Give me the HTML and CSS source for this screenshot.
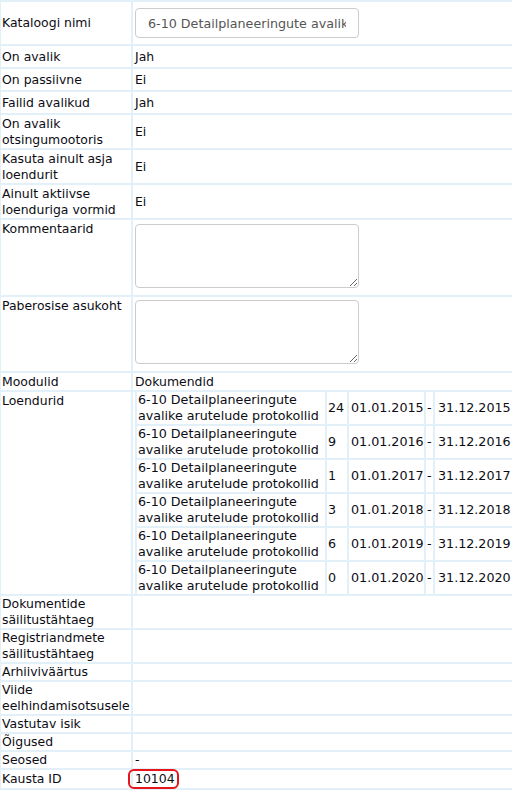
FILE: index.html
```html
<!DOCTYPE html>
<html lang="et">
<head>
<meta charset="utf-8">
<title>Kataloog</title>
<link rel="stylesheet" href="styles.css">
</head>
<body>
<table class="form">
  <tr class="r-first">
    <td class="lbl">Kataloogi nimi</td>
    <td class="val"><input class="field" type="text" value="6-10 Detailplaneeringute avalike arutelude protokollid"></td>
  </tr>
  <tr class="r-one"><td class="lbl">On avalik</td><td class="val">Jah</td></tr>
  <tr class="r-one"><td class="lbl">On passiivne</td><td class="val">Ei</td></tr>
  <tr class="r-one"><td class="lbl">Failid avalikud</td><td class="val">Jah</td></tr>
  <tr class="r-two"><td class="lbl">On avalik otsingumootoris</td><td class="val">Ei</td></tr>
  <tr class="r-two"><td class="lbl">Kasuta ainult asja loendurit</td><td class="val">Ei</td></tr>
  <tr class="r-two"><td class="lbl">Ainult aktiivse loenduriga vormid</td><td class="val">Ei</td></tr>
  <tr><td class="lbl top">Kommentaarid</td><td class="val"><textarea class="area"></textarea></td></tr>
  <tr><td class="lbl top">Paberosise asukoht</td><td class="val"><textarea class="area area2"></textarea></td></tr>
  <tr class="r-mod"><td class="lbl">Moodulid</td><td class="val">Dokumendid</td></tr>
  <tr>
    <td class="lbl top">Loendurid</td>
    <td class="val nest-cell">
      <table class="counters">
        <tr><td class="c-name">6-10 Detailplaneeringute avalike arutelude protokollid</td><td class="c-num">24</td><td class="c-date">01.01.2015</td><td class="c-dash">-</td><td class="c-end">31.12.2015</td></tr>
        <tr><td class="c-name">6-10 Detailplaneeringute avalike arutelude protokollid</td><td class="c-num">9</td><td class="c-date">01.01.2016</td><td class="c-dash">-</td><td class="c-end">31.12.2016</td></tr>
        <tr><td class="c-name">6-10 Detailplaneeringute avalike arutelude protokollid</td><td class="c-num">1</td><td class="c-date">01.01.2017</td><td class="c-dash">-</td><td class="c-end">31.12.2017</td></tr>
        <tr><td class="c-name">6-10 Detailplaneeringute avalike arutelude protokollid</td><td class="c-num">3</td><td class="c-date">01.01.2018</td><td class="c-dash">-</td><td class="c-end">31.12.2018</td></tr>
        <tr><td class="c-name">6-10 Detailplaneeringute avalike arutelude protokollid</td><td class="c-num">6</td><td class="c-date">01.01.2019</td><td class="c-dash">-</td><td class="c-end">31.12.2019</td></tr>
        <tr><td class="c-name">6-10 Detailplaneeringute avalike arutelude protokollid</td><td class="c-num">0</td><td class="c-date">01.01.2020</td><td class="c-dash">-</td><td class="c-end">31.12.2020</td></tr>
      </table>
    </td>
  </tr>
  <tr><td class="lbl">Dokumentide säilitustähtaeg</td><td class="val"></td></tr>
  <tr><td class="lbl">Registriandmete säilitustähtaeg</td><td class="val"></td></tr>
  <tr><td class="lbl">Arhiiviväärtus</td><td class="val"></td></tr>
  <tr><td class="lbl">Viide eelhindamisotsusele</td><td class="val"></td></tr>
  <tr><td class="lbl">Vastutav isik</td><td class="val"></td></tr>
  <tr><td class="lbl">Õigused</td><td class="val"></td></tr>
  <tr><td class="lbl">Seosed</td><td class="val">-</td></tr>
  <tr class="r-id"><td class="lbl">Kausta ID</td><td class="val"><span class="mark">10104</span></td></tr>
</table>
</body>
</html>
```
FILE: styles.css
```css
html, body {
  margin: 0;
  padding: 0;
  background: #ffffff;
  overflow: hidden;
}

body {
  font-family: "DejaVu Sans", Verdana, sans-serif;
  font-size: 12.45px;
  line-height: 16px;
  color: #0c0c14;
}

.form {
  border-collapse: separate;
  border-spacing: 2px;
  background: #e1f0f9;
  width: 524px;
  margin: 0 0 0 -1px;
}

.form td {
  background: #ffffff;
  padding: 0 2px 0 2px;
  vertical-align: middle;
}

.form td.lbl {
  width: 129px;
  padding: 0 0 0 1px;
}

.form td.top {
  vertical-align: top;
  padding-top: 1px;
}

.r-first td { height: 42px; }
.r-one td { height: 21px; }
.r-two td { height: 33px; }
.r-mod td { height: 17px; }
.r-id td { height: 18px; }

.field {
  display: block;
  box-sizing: border-box;
  width: 224px;
  height: 30px;
  margin: 0;
  padding: 0 12px;
  border: 1px solid #cccccc;
  border-radius: 4px;
  font-family: "DejaVu Sans", Verdana, sans-serif;
  font-size: 12.7px;
  color: #555555;
  background: #ffffff;
}

.area {
  display: block;
  box-sizing: border-box;
  width: 224px;
  height: 64px;
  margin: 4px 0 7px 0;
  padding: 4px 6px;
  border: 1px solid #cccccc;
  border-radius: 4px;
  font-family: "DejaVu Sans", Verdana, sans-serif;
  font-size: 12.7px;
  background: #ffffff;
}

.area2 {
  margin-top: 3px;
}

.form td.nest-cell {
  padding: 0 0 0 2px;
}

.counters {
  border-collapse: separate;
  border-spacing: 2px;
  background: #e1f0f9;
  width: 100%;
  margin: -2px 0 -2px 0;
  font-size: 12.7px;
}

.counters td {
  background: #ffffff;
  padding: 0 1px 0 1px;
  height: 32px;
  vertical-align: middle;
  white-space: nowrap;
}

.counters td.c-name {
  white-space: normal;
  width: 186px;
}

.counters td.c-num {
  width: 18px;
}

.counters td.c-date {
  width: 73px;
  padding-left: 2px;
  padding-right: 0;
}

.counters td.c-dash {
  width: 5px;
}

.counters td.c-end {
  padding-left: 3px;
}

.mark {
  position: relative;
  display: inline-block;
}

.mark::after {
  content: "";
  position: absolute;
  left: -7px;
  right: -4px;
  top: -2px;
  bottom: -2px;
  border: 2px solid #e8141c;
  border-radius: 6px;
}
```
